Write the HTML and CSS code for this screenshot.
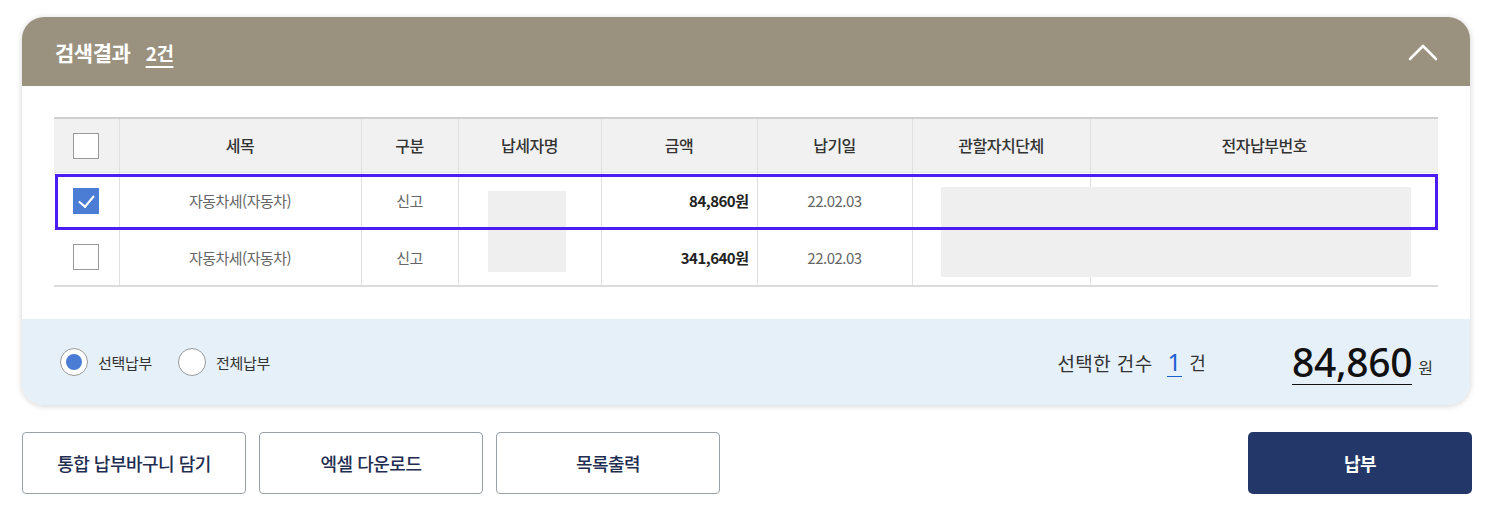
FILE: index.html
```html
<!DOCTYPE html>
<html lang="ko">
<head>
  <meta charset="UTF-8">
  <meta name="viewport" content="width=device-width, initial-scale=1.0">
  <title>검색결과</title>
  <link rel="stylesheet" href="styles.css">
</head>
<body>
  <div class="result">
    <div class="result-head">
      <h2>검색결과 <span class="count">2건</span></h2>
      <svg class="toggle" width="30" height="18" viewBox="0 0 30 18">
        <path d="M2 16 L15 3 L28 16" fill="none" stroke="#fff" stroke-width="2.6" stroke-linecap="round" stroke-linejoin="round"/>
      </svg>
    </div>

    <div class="result-body">
      <div class="table-wrap">
        <table>
          <colgroup>
            <col style="width:65px">
            <col style="width:242px">
            <col style="width:97px">
            <col style="width:143px">
            <col style="width:156px">
            <col style="width:155px">
            <col style="width:178px">
            <col>
          </colgroup>
          <thead>
            <tr>
              <th><span class="check"></span></th>
              <th>세목</th>
              <th>구분</th>
              <th>납세자명</th>
              <th>금액</th>
              <th>납기일</th>
              <th>관할자치단체</th>
              <th>전자납부번호</th>
            </tr>
          </thead>
          <tbody>
            <tr>
              <td><span class="check on"></span></td>
              <td>자동차세(자동차)</td>
              <td>신고</td>
              <td></td>
              <td class="amount">84,860원</td>
              <td>22.02.03</td>
              <td></td>
              <td></td>
            </tr>
            <tr>
              <td><span class="check"></span></td>
              <td>자동차세(자동차)</td>
              <td>신고</td>
              <td></td>
              <td class="amount">341,640원</td>
              <td>22.02.03</td>
              <td></td>
              <td></td>
            </tr>
          </tbody>
        </table>
        <div class="mask mask-name"></div>
        <div class="mask mask-num"></div>
        <div class="highlight"></div>
      </div>
    </div>

    <div class="result-foot">
      <div class="radios">
        <label class="radio"><span class="dot on"></span>선택납부</label>
        <label class="radio"><span class="dot"></span>전체납부</label>
      </div>
      <div class="summary">
        <span class="label">선택한 건수</span>
        <span class="num">1</span>
        <span class="unit">건</span>
        <span class="total">84,860</span>
        <span class="won">원</span>
      </div>
    </div>
  </div>

  <div class="actions">
    <button class="btn">통합 납부바구니 담기</button>
    <button class="btn">엑셀 다운로드</button>
    <button class="btn">목록출력</button>
    <button class="btn pay">납부</button>
  </div>
</body>
</html>
```

FILE: styles.css
```css
* { box-sizing: border-box; }
body {
  margin: 0;
  padding: 17px 16px 0 22px;
  font-family: "Noto Sans CJK KR", "Noto Sans", sans-serif;
  color: #333;
  background: #fff;
}

.result {
  width: 1448px;
  border-radius: 22px;
  background: #fff;
  overflow: hidden;
  box-shadow: 0 1px 6px rgba(0, 0, 0, 0.18);
}
.result-head {
  height: 69px;
  background: #9b917f;
  display: flex;
  align-items: center;
  justify-content: space-between;
  padding: 0 32px 0 33px;
}
.result-head h2 {
  margin: 0;
  color: #fff;
  font-size: 21px;
  font-weight: 700;
  letter-spacing: -0.5px;
}
.result-head .count {
  margin-left: 10px;
  font-size: 19px;
  text-decoration: underline;
  text-underline-offset: 5px;
  text-decoration-thickness: 1.5px;
}

.result-body { padding: 31px 32px 32px; }
.table-wrap { position: relative; }
table {
  width: 100%;
  border-collapse: collapse;
  table-layout: fixed;
  border-top: 2px solid #cfcfcf;
  border-bottom: 2px solid #dcdcdc;
}
th, td {
  border-left: 1px solid #e0e0e0;
  text-align: center;
  padding: 0;
}
th:first-child, td:first-child { border-left: 0; }
th {
  height: 54px;
  background: #f1f1f1;
  font-size: 16px;
  font-weight: 500;
  color: #333;
  letter-spacing: -0.5px;
}
td {
  height: 57px;
  font-size: 15px;
  color: #666;
  letter-spacing: -0.5px;
  border-top: 1px solid #e6e6e6;
}
td.amount {
  text-align: right;
  padding-right: 8px;
  font-weight: 700;
  color: #222;
}

.check {
  display: inline-block;
  width: 26px;
  height: 26px;
  border: 1px solid #999;
  background: #fff;
  vertical-align: middle;
  position: relative;
}
.check.on {
  background: #4a7dd3;
  border-color: #4a7dd3;
}
.check.on::after {
  content: "";
  position: absolute;
  left: 8px;
  top: 3px;
  width: 7px;
  height: 13px;
  border: solid #fff;
  border-width: 0 2.5px 2.5px 0;
  transform: rotate(40deg);
}

.mask {
  position: absolute;
  background: #efefef;
}
.mask-name { left: 434px; top: 74px; width: 78px; height: 81px; }
.mask-num { left: 887px; top: 70px; width: 470px; height: 90px; }
.highlight {
  position: absolute;
  left: 1px;
  top: 57px;
  width: 1383px;
  height: 56px;
  border: 3px solid #4b1cf3;
}

.result-foot {
  height: 86px;
  background: #e6f0f9;
  display: flex;
  align-items: center;
  justify-content: space-between;
  padding: 0 37px 0 38px;
}
.radios { display: flex; gap: 26px; }
.radio {
  display: flex;
  align-items: center;
  font-size: 15px;
  color: #333;
  letter-spacing: -0.3px;
}
.dot {
  width: 28px;
  height: 28px;
  border-radius: 50%;
  border: 1px solid #999;
  background: #fff;
  margin-right: 10px;
  position: relative;
}
.dot.on::after {
  content: "";
  position: absolute;
  left: 5px;
  top: 5px;
  width: 16px;
  height: 16px;
  border-radius: 50%;
  background: #4a7dd3;
}

.summary {
  display: flex;
  align-items: center;
  color: #333;
}
.summary .label { font-size: 19px; letter-spacing: 0.4px; }
.summary .num {
  margin-left: 14px;
  font-size: 24px;
  color: #1a5fd0;
  font-family: "Noto Sans", sans-serif;
  border-bottom: 1.5px solid #1a5fd0;
  line-height: 28px;
  padding: 0 1px;
}
.summary .unit { margin-left: 7px; font-size: 18px; }
.summary .total {
  margin-left: 86px;
  font-family: "Noto Sans", sans-serif;
  font-size: 39px;
  font-weight: 500;
  color: #111;
  line-height: 44px;
  border-bottom: 1.5px solid #111;
  letter-spacing: -0.3px;
}
.summary .won { margin-left: 6px; font-size: 16px; margin-top: 10px; }

.actions {
  display: flex;
  gap: 13px;
  margin-top: 27px;
  width: 1450px;
}
.btn {
  width: 224px;
  height: 62px;
  border: 1px solid #9aa0a8;
  border-radius: 4px;
  background: #fff;
  font-family: "Noto Sans CJK KR", sans-serif;
  font-size: 18px;
  font-weight: 500;
  color: #1f2d50;
  letter-spacing: -0.5px;
}
.btn.pay {
  margin-left: auto;
  border: 0;
  border-radius: 5px;
  background: #233869;
  color: #fff;
  font-weight: 700;
}
```
